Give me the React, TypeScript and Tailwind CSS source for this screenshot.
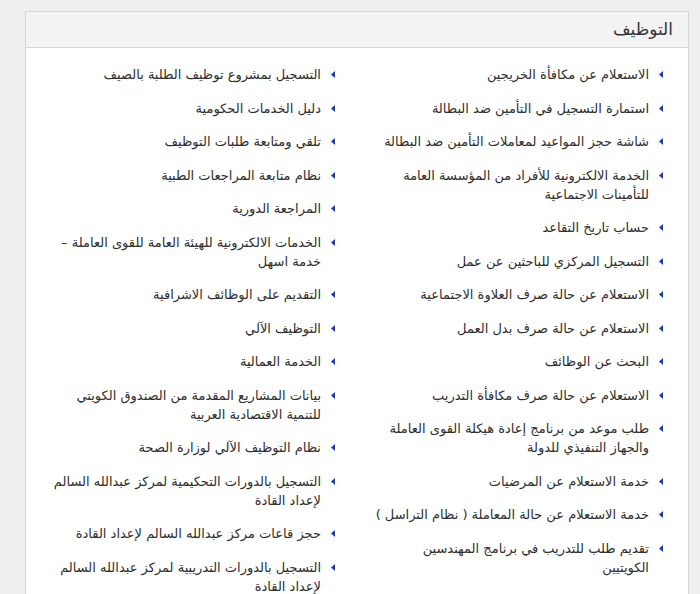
const rightItems: string[][] = [
  ["الاستعلام عن مكافأة الخريجين"],
  ["استمارة التسجيل في التأمين ضد البطالة"],
  ["شاشة حجز المواعيد لمعاملات التأمين ضد البطالة"],
  ["الخدمة الالكترونية للأفراد من المؤسسة العامة", "للتأمينات الاجتماعية"],
  ["حساب تاريخ التقاعد"],
  ["التسجيل المركزي للباحثين عن عمل"],
  ["الاستعلام عن حالة صرف العلاوة الاجتماعية"],
  ["الاستعلام عن حالة صرف بدل العمل"],
  ["البحث عن الوظائف"],
  ["الاستعلام عن حالة صرف مكافأة التدريب"],
  ["طلب موعد من برنامج إعادة هيكلة القوى العاملة", "والجهاز التنفيذي للدولة"],
  ["خدمة الاستعلام عن المرضيات"],
  ["خدمة الاستعلام عن حالة المعاملة ( نظام التراسل )"],
  ["تقديم طلب للتدريب في برنامج المهندسين", "الكويتيين"],
];

const leftItems: string[][] = [
  ["التسجيل بمشروع توظيف الطلبة بالصيف"],
  ["دليل الخدمات الحكومية"],
  ["تلقي ومتابعة طلبات التوظيف"],
  ["نظام متابعة المراجعات الطبية"],
  ["المراجعة الدورية"],
  ["الخدمات الالكترونية للهيئة العامة للقوى العاملة –", "خدمة اسهل"],
  ["التقديم على الوظائف الاشرافية"],
  ["التوظيف الآلي"],
  ["الخدمة العمالية"],
  ["بيانات المشاريع المقدمة من الصندوق الكويتي", "للتنمية الاقتصادية العربية"],
  ["نظام التوظيف الآلي لوزارة الصحة"],
  ["التسجيل بالدورات التحكيمية لمركز عبدالله السالم", "لإعداد القادة"],
  ["حجز قاعات مركز عبدالله السالم لإعداد القادة"],
  ["التسجيل بالدورات التدريبية لمركز عبدالله السالم", "لإعداد القادة"],
];

function LinkList({ items, className }: { items: string[][]; className: string }) {
  return (
    <ul className={className}>
      {items.map((lines, i) => (
        <li key={i} className="mb-[14.5px] flex items-start gap-[10px]">
          <svg width="4" height="7" viewBox="0 0 4 7" className="mt-[6px] shrink-0">
            <path d="M0 3.5 L4 0 L4 7 Z" fill="#1c3aa8" />
          </svg>
          <a href="#" className="text-[#2e2e2e] leading-[19px]">
            {lines.map((l, j) => (
              <span key={j} className="block whitespace-nowrap">
                {l}
              </span>
            ))}
          </a>
        </li>
      ))}
    </ul>
  );
}

export default function App() {
  return (
    <div
      dir="rtl"
      className="min-h-screen bg-[#efefef] pt-[11px] pr-[11px] pl-[25px] font-['DejaVu_Sans',sans-serif]"
    >
      <div className="min-h-[600px] border border-[#d6d6d6] bg-white">
        <div className="flex h-[36px] items-center border-b border-[#d6d6d6] bg-[#f3f3f3] pr-[15px]">
          <h2 className="text-[17px] text-[#333333]">التوظيف</h2>
        </div>
        <div className="grid grid-cols-[331px_331px] pt-[17px] text-[13px]">
          <LinkList items={rightItems} className="pr-[25px]" />
          <LinkList items={leftItems} className="pr-[22px]" />
        </div>
      </div>
    </div>
  );
}
